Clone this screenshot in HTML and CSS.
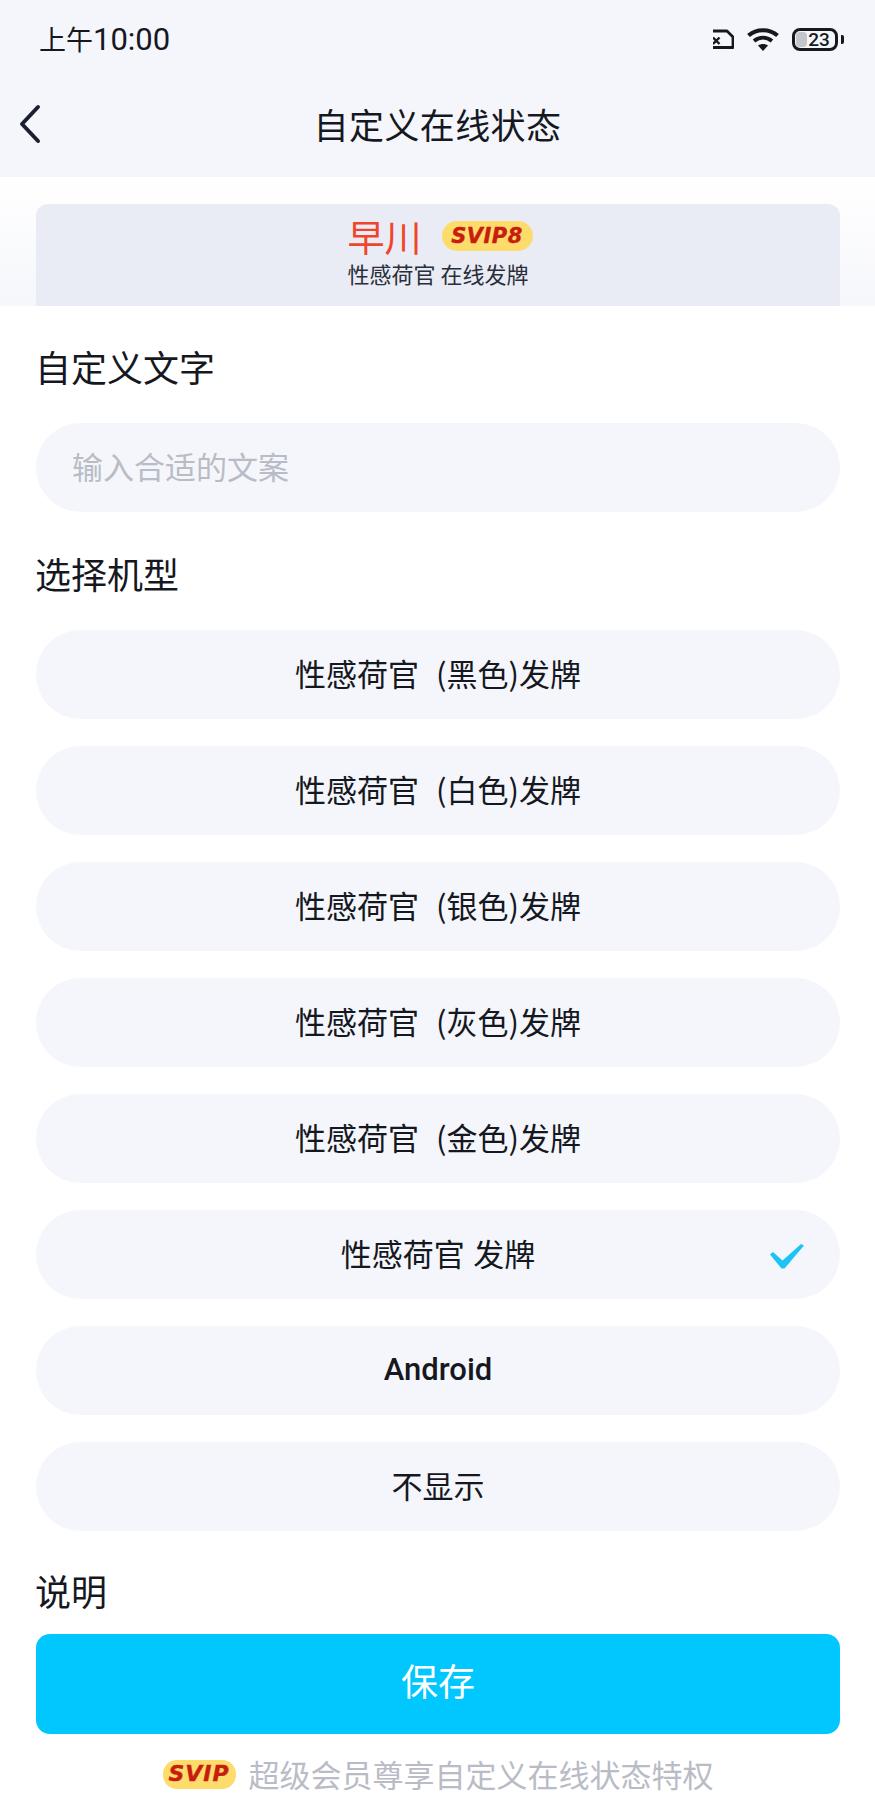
FILE: index.html
```html
<!DOCTYPE html>
<html lang="zh-CN">
<head>
    <meta charset="UTF-8">
    <meta name="viewport" content="width=device-width, initial-scale=1.0">
    <title>自定义在线状态</title>
    <link rel="stylesheet" href="styles.css">
</head>
<body>
    <div class="top">
        <div class="status-bar">
            <span class="time"><span class="time-prefix">上午</span>10:00</span>
            <div class="status-icons">
                <svg class="sim-icon" width="21" height="20" viewBox="0 0 21 20">
                    <path d="M0 2h14l6 6v10.500H0" fill="none" stroke="#16181f" stroke-width="2.800" stroke-linejoin="round"/>
                    <path d="M0 8.500l6.500 6.500M6.500 8.500L0 15" stroke="#16181f" stroke-width="2.400"/>
                </svg>
                <svg class="wifi-icon" width="32" height="23" viewBox="0 0 32 23">
                    <path d="M1.500 7.500C9.500 .5 22.500 .5 30.500 7.500" fill="none" stroke="#16181f" stroke-width="4.200"/>
                    <path d="M7 13c5.500-4.200 12.500-4.200 18 0" fill="none" stroke="#16181f" stroke-width="4"/>
                    <path d="M11 17.500c3-2 7-2 10 0L16 23z" fill="#16181f"/>
                </svg>
                <div class="battery">
                    <div class="battery-body">
                        <span class="battery-level"></span>
                        <span class="battery-num">23</span>
                    </div>
                    <span class="battery-cap"></span>
                </div>
            </div>
        </div>
        <div class="nav-bar">
            <svg class="back-icon" width="24" height="40" viewBox="0 0 24 40">
                <path d="M20 3L4 20l16 17" fill="none" stroke="#1b2030" stroke-width="4" stroke-linecap="round" stroke-linejoin="round"/>
            </svg>
            <h1 class="title">自定义在线状态</h1>
        </div>
    </div>

    <div class="preview-wrap">
        <div class="preview">
            <div class="preview-name">
                <span class="name">早川</span>
                <span class="badge badge-level">SVIP8</span>
            </div>
            <p class="preview-sub">性感荷官 在线发牌</p>
        </div>
    </div>

    <div class="content">
        <h2 class="label label-first">自定义文字</h2>
        <div class="input">输入合适的文案</div>

        <h2 class="label label-models">选择机型</h2>
        <div class="options">
            <div class="option">性感荷官&nbsp; (黑色)发牌</div>
            <div class="option">性感荷官&nbsp; (白色)发牌</div>
            <div class="option">性感荷官&nbsp; (银色)发牌</div>
            <div class="option">性感荷官&nbsp; (灰色)发牌</div>
            <div class="option">性感荷官&nbsp; (金色)发牌</div>
            <div class="option selected">
                性感荷官 发牌
                <svg class="check" width="36" height="28" viewBox="0 0 36 28">
                    <path d="M1 12.500l3-2.500 9.500 8.500L32 2l3 1.500-19.500 23h-3z" fill="#1cc4f6"/>
                </svg>
            </div>
            <div class="option option-latin">Android</div>
            <div class="option">不显示</div>
        </div>

        <h2 class="label label-note">说明</h2>
        <button class="save">保存</button>
        <div class="tip">
            <span class="badge badge-tip">SVIP</span>
            <span>超级会员尊享自定义在线状态特权</span>
        </div>
    </div>
</body>
</html>
```

FILE: styles.css
```css
* {
    box-sizing: border-box;
}

html, body {
    margin: 0;
    padding: 0;
}

body {
    width: 875px;
    height: 1814px;
    overflow: hidden;
    background-color: #fff;
    color: #16181f;
    font-family: "Noto Sans CJK SC", Roboto, sans-serif;
}

.top {
    height: 177px;
    background-color: #f4f6fb;
}

.status-bar {
    display: flex;
    justify-content: space-between;
    align-items: center;
    height: 78px;
    padding: 0 31px 0 39px;
}

.time {
    font-family: Roboto, "Noto Sans CJK SC", sans-serif;
    font-size: 31px;
    line-height: 1;
}

.time-prefix {
    font-size: 27px;
}

.status-icons {
    display: flex;
    align-items: center;
    gap: 13px;
}

.battery {
    display: flex;
    align-items: center;
    gap: 3px;
}

.battery-body {
    position: relative;
    display: flex;
    justify-content: center;
    align-items: center;
    width: 46px;
    height: 23px;
    padding-left: 8px;
    border: 3px solid #16181f;
    border-radius: 8px;
}

.battery-level {
    position: absolute;
    left: 1px;
    top: 1px;
    bottom: 1px;
    width: 11px;
    border-radius: 4px;
    background-color: #c4c6cb;
}

.battery-num {
    position: relative;
    font-family: Roboto, sans-serif;
    font-size: 19px;
    font-weight: 500;
    line-height: 1;
}

.battery-cap {
    width: 3px;
    height: 9px;
    border-radius: 0 2px 2px 0;
    background-color: #16181f;
}

.nav-bar {
    position: relative;
    display: flex;
    justify-content: center;
    align-items: center;
    height: 92px;
    margin-top: -1px;
}

.back-icon {
    position: absolute;
    left: 18px;
    top: 27px;
}

.title {
    margin: 0;
    font-size: 35px;
    font-weight: 400;
    letter-spacing: 0.4px;
}

.preview-wrap {
    height: 129px;
    padding: 27px 35px 0 36px;
    background: linear-gradient(#fff, #f6f7fb);
}

.preview {
    height: 102px;
    padding-top: 10px;
    border-radius: 12px 12px 0 0;
    background-color: #e9ecf4;
    text-align: center;
}

.preview-name {
    display: flex;
    justify-content: center;
    align-items: center;
    gap: 20px;
    height: 44px;
    padding-left: 4px;
}

.name {
    color: #f0452a;
    font-size: 37px;
    line-height: 40px;
}

.badge {
    display: inline-flex;
    justify-content: center;
    align-items: center;
    background-color: #fddc6c;
    color: #c81d0e;
    font-family: "DejaVu Sans", sans-serif;
    font-style: italic;
    font-weight: 700;
    -webkit-text-stroke: 0.4px #c81d0e;
}

.badge-level {
    width: 91px;
    height: 30px;
    border-radius: 15px;
    font-size: 21px;
    letter-spacing: 0.5px;
}

.preview-sub {
    margin: 0;
    color: #2a2e3a;
    font-size: 22px;
    line-height: 30px;
}

.content {
    padding: 0 35px 0 36px;
}

.label {
    margin: 0 0 0 -1px;
    font-size: 36px;
    font-weight: 400;
    line-height: 50px;
}

.label-first {
    margin-top: 35px;
}

.input {
    display: flex;
    align-items: center;
    height: 89px;
    margin-top: 32px;
    padding: 0 0 4px 36px;
    border-radius: 45px;
    background-color: #f4f6fb;
    color: #b9bcc6;
    font-size: 31px;
}

.label-models {
    margin-top: 36px;
}

.options {
    display: flex;
    flex-direction: column;
    gap: 27px;
    margin-top: 32px;
}

.option {
    position: relative;
    display: flex;
    justify-content: center;
    align-items: center;
    height: 89px;
    padding-bottom: 5px;
    border-radius: 45px;
    background-color: #f4f6fb;
    font-size: 31px;
    word-spacing: 1.5px;
}

.option-latin {
    padding-bottom: 2px;
    font-family: Roboto, sans-serif;
    font-weight: 500;
}

.check {
    position: absolute;
    right: 35px;
    top: 32px;
}

.label-note {
    margin-top: 34px;
}

.save {
    display: block;
    width: 100%;
    height: 100px;
    margin-top: 19px;
    padding: 0 0 9px;
    border: 0;
    border-radius: 14px;
    background-color: #00c8ff;
    color: #fff;
    font-family: inherit;
    font-size: 37px;
}

.tip {
    display: flex;
    justify-content: center;
    align-items: center;
    gap: 13px;
    margin-top: 19px;
    color: #b9bcc6;
    font-size: 31px;
    line-height: 42px;
}

.badge-tip {
    width: 73px;
    height: 29px;
    border-radius: 14px;
    font-size: 22px;
    letter-spacing: 1px;
}
```
